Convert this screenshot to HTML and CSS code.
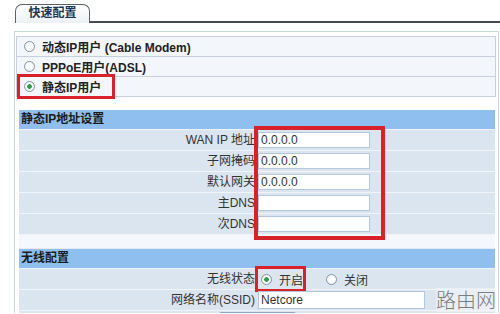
FILE: index.html
```html
<!DOCTYPE html>
<html lang="zh-CN">
<head>
<meta charset="UTF-8" />
<title>快速配置</title>
<link rel="stylesheet" href="styles.css">
</head>
<body>
  <div class="tabs">
    <span class="tabs-gap"></span>
    <span class="tab">快速配置</span>
    <span class="tabs-fill"></span>
  </div>

  <div class="panel">
    <div class="options">
      <div class="option">
        <label class="choice"><input type="radio" name="wanType" />动态IP用户 (Cable Modem)</label>
      </div>
      <div class="option">
        <label class="choice"><input type="radio" name="wanType" />PPPoE用户(ADSL)</label>
      </div>
      <div class="option">
        <label class="choice mark"><input type="radio" name="wanType" checked />静态IP用户</label>
      </div>
    </div>

    <div class="section">
      <div class="sec-head">静态IP地址设置</div>
      <div class="row">
        <div class="cell-label">WAN IP 地址</div>
        <div class="cell-value"><input class="text-input" type="text" value="0.0.0.0" /></div>
      </div>
      <div class="row">
        <div class="cell-label">子网掩码</div>
        <div class="cell-value"><input class="text-input" type="text" value="0.0.0.0" /></div>
      </div>
      <div class="row">
        <div class="cell-label">默认网关</div>
        <div class="cell-value"><input class="text-input" type="text" value="0.0.0.0" /></div>
      </div>
      <div class="row">
        <div class="cell-label">主DNS</div>
        <div class="cell-value"><input class="text-input" type="text" value="" /></div>
      </div>
      <div class="row">
        <div class="cell-label">次DNS</div>
        <div class="cell-value"><input class="text-input" type="text" value="" /></div>
      </div>
      <div class="row-blank"></div>

      <div class="sec-head">无线配置</div>
      <div class="row">
        <div class="cell-label">无线状态</div>
        <div class="cell-value">
          <label class="choice mark"><input type="radio" name="wifi" checked />开启</label>
          <label class="choice choice-off"><input type="radio" name="wifi" />关闭</label>
        </div>
      </div>
      <div class="row">
        <div class="cell-label">网络名称(SSID)</div>
        <div class="cell-value"><input class="text-input ssid" type="text" value="Netcore" /></div>
      </div>
      <div class="row row-center">
        <button type="button" class="btn" aria-label="保存"></button>
      </div>

      <!-- red annotation around the address inputs -->
      <div class="mark-box"></div>
    </div>
  </div>

  <div class="watermark">路由网</div>
</body>
</html>
```

FILE: styles.css
```css
:root {
  --mark-red: #d7212b;
  --head-blue: #8fbfee;
  --row-bg: #dbe5f0;
  --font: "Liberation Sans", "Noto Sans CJK SC", sans-serif;
}
* {
  box-sizing: border-box;
}
body {
  margin: 0;
  background: #fff;
  font-family: var(--font);
  font-size: 12px;
  color: #333;
  overflow: hidden;
  position: relative;
  height: 314px;
}

/* tab strip */
.tabs {
  display: flex;
  padding-top: 4px;
}
.tabs-gap {
  width: 15px;
}
.tab {
  width: 75px;
  height: 19px;
  border: 1px solid #5b6168;
  border-bottom: none;
  border-radius: 7px 7px 0 0;
  background: linear-gradient(#ffffff, #edf1f5);
  text-align: center;
  line-height: 17px;
  font-weight: 700;
  color: #1c3655;
}
.tabs-fill {
  flex: 1;
  border-bottom: 2px solid #44494f;
}

.panel {
  margin: 8px 1px 0 14px;
  border: 1px solid #c5d9d6;
  border-bottom: none;
  padding-top: 4px;
  height: 282px;
  overflow: hidden;
}

/* connection type list */
.options {
  margin: 0 2px 13px 1px;
  border: 1px solid #c7d0dc;
  background: #f3f6fb;
}
.option {
  height: 20px;
  border-bottom: 1px solid #c7d0dc;
  display: flex;
  align-items: center;
  padding-left: 3px;
  font-weight: 700;
  color: #222;
}
.option:last-child {
  height: 19px;
  border-bottom: none;
}

.choice {
  display: inline-flex;
  align-items: center;
  gap: 7px;
  height: 19px;
  padding: 0 4px;
}
.choice input {
  -webkit-appearance: none;
  appearance: none;
  width: 11px;
  height: 11px;
  margin: 0;
  border: 1px solid #8596a8;
  border-radius: 50%;
  background: radial-gradient(circle, #ffffff 40%, #e3e9ef 100%);
}
.choice input:checked {
  background: radial-gradient(circle, #2c9f45 0 2px, #ffffff 2.6px, #e3e9ef 100%);
}
.option .mark {
  padding-right: 11px;
}
.mark {
  outline: 3px solid var(--mark-red);
}

/* settings table */
.section {
  position: relative;
  margin: 0 3px 0 4px;
}
.sec-head {
  height: 20px;
  border-bottom: 1px solid #eef3f9;
  background: var(--head-blue);
  padding-left: 2px;
  line-height: 19px;
  font-weight: 700;
  color: #1b1b1b;
}
.row {
  display: grid;
  grid-template-columns: 236px 1fr;
  height: 21px;
  border-bottom: 1px solid #f1f5f9;
  background: var(--row-bg);
}
.row-blank {
  height: 14px;
  border-bottom: 1px solid #e3eaf2;
  background: #f4f7fb;
}
.cell-label {
  text-align: right;
  line-height: 20px;
  color: #333;
}
.cell-value {
  display: flex;
  align-items: center;
  padding-left: 3px;
}
.cell-value .choice {
  padding: 0 0 0 3px;
  height: 20px;
}
.cell-value .choice-off {
  margin-left: 20px;
}
.text-input {
  width: 112px;
  height: 16px;
  border: 1px solid #b4c8dd;
  background: #fff;
  padding: 0 2px;
  font-family: var(--font);
  font-size: 12px;
  color: #333;
}
.ssid {
  width: 167px;
  height: 18px;
}
.row-center {
  display: flex;
  justify-content: center;
  align-items: flex-start;
  padding-top: 1px;
}
.btn {
  width: 75px;
  height: 20px;
  border: 1px solid #86a9cf;
  background: linear-gradient(#e8f1fb, #c6dbf0);
}

.mark-box {
  position: absolute;
  left: 235px;
  top: 16px;
  width: 131px;
  height: 114px;
  border: 4px solid var(--mark-red);
  pointer-events: none;
}

.watermark {
  position: absolute;
  left: 436px;
  top: 288px;
  font-family: "Noto Sans CJK SC", sans-serif;
  font-weight: 300;
  font-size: 20px;
  line-height: 24px;
  color: #7d7d7d;
  background: rgba(240, 244, 248, 0.7);
}
```
